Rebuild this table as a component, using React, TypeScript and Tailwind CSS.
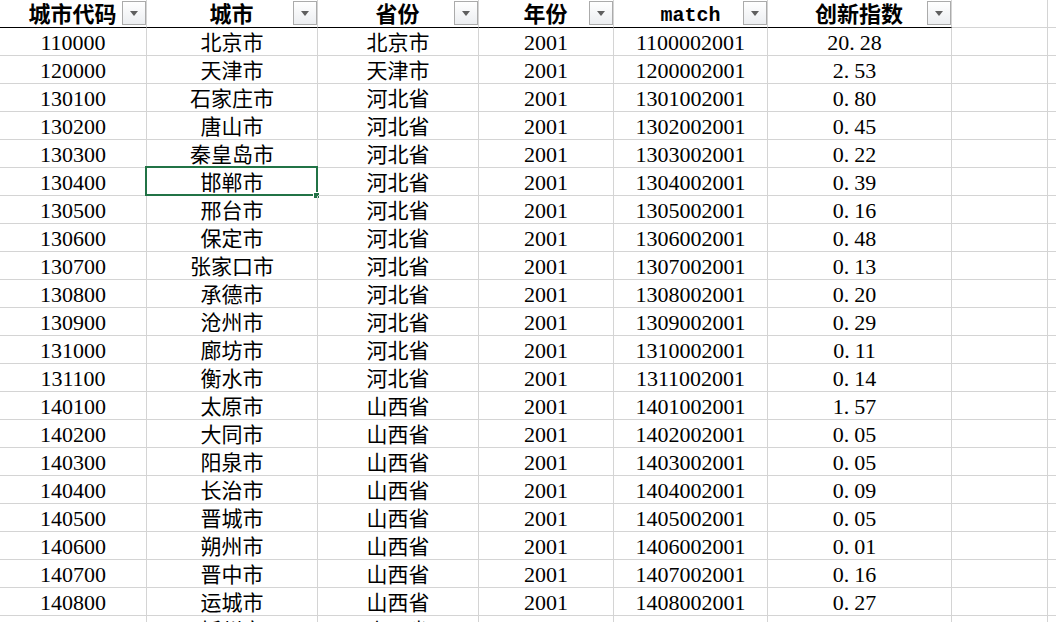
const rows: [string, string, string, string, string, string][] = [
  ["110000", "北京市", "北京市", "2001", "1100002001", "20.28"],
  ["120000", "天津市", "天津市", "2001", "1200002001", "2.53"],
  ["130100", "石家庄市", "河北省", "2001", "1301002001", "0.80"],
  ["130200", "唐山市", "河北省", "2001", "1302002001", "0.45"],
  ["130300", "秦皇岛市", "河北省", "2001", "1303002001", "0.22"],
  ["130400", "邯郸市", "河北省", "2001", "1304002001", "0.39"],
  ["130500", "邢台市", "河北省", "2001", "1305002001", "0.16"],
  ["130600", "保定市", "河北省", "2001", "1306002001", "0.48"],
  ["130700", "张家口市", "河北省", "2001", "1307002001", "0.13"],
  ["130800", "承德市", "河北省", "2001", "1308002001", "0.20"],
  ["130900", "沧州市", "河北省", "2001", "1309002001", "0.29"],
  ["131000", "廊坊市", "河北省", "2001", "1310002001", "0.11"],
  ["131100", "衡水市", "河北省", "2001", "1311002001", "0.14"],
  ["140100", "太原市", "山西省", "2001", "1401002001", "1.57"],
  ["140200", "大同市", "山西省", "2001", "1402002001", "0.05"],
  ["140300", "阳泉市", "山西省", "2001", "1403002001", "0.05"],
  ["140400", "长治市", "山西省", "2001", "1404002001", "0.09"],
  ["140500", "晋城市", "山西省", "2001", "1405002001", "0.05"],
  ["140600", "朔州市", "山西省", "2001", "1406002001", "0.01"],
  ["140700", "晋中市", "山西省", "2001", "1407002001", "0.16"],
  ["140800", "运城市", "山西省", "2001", "1408002001", "0.27"],
  ["140900", "忻州市", "山西省", "2001", "1409002001", "0.12"],
];

const widths = ["w-[147px]", "w-[171px]", "w-[161px]", "w-[135px]", "w-[154px]", "w-[184px]"];
const headers = ["城市代码", "城市", "省份", "年份", "match", "创新指数"];
// columns holding plain digits are set a bit larger than the CJK ones
const numeric = [true, false, false, true, true, true];

const FilterButton = () => (
  <div className="absolute right-0 top-[1px] flex h-[24px] w-[24px] items-center justify-center border border-[#ababab] bg-gradient-to-b from-white to-[#eceef1]">
    <div className="h-0 w-0 border-x-[4px] border-t-[5px] border-x-transparent border-t-[#5f5f5f]" />
  </div>
);

const Decimal = ({ value }: { value: string }) => {
  const [a, b] = value.split(".");
  return (
    <span className="pr-[10px] pt-[3px]">
      {a}
      <span className="mr-[5px]">.</span>
      {b}
    </span>
  );
};

const App = () => {
  return (
    <div
      className="h-[622px] w-[1056px] overflow-hidden bg-white text-black"
      style={{ fontFamily: '"Liberation Serif", "Noto Sans CJK SC", serif' }}
    >
      {/* header */}
      <div className="flex h-[28px]">
        {headers.map((h, i) => (
          <div
            key={h}
            className={`relative flex h-full shrink-0 items-center justify-center border-b border-r border-b-black border-r-[#d4d4d4] leading-none ${widths[i]}`}
          >
            {h === "match" ? (
              <span className="pt-[4px] text-[20px] font-bold" style={{ fontFamily: '"Liberation Mono", monospace' }}>
                match
              </span>
            ) : (
              <span className="pr-[1px] pt-[3px] text-[22px] font-bold">{h}</span>
            )}
            <FilterButton />
          </div>
        ))}
        <div className="h-full w-[96px] shrink-0 border-b border-r border-[#d4d4d4]" />
        <div className="h-full flex-1 border-b border-[#d4d4d4]" />
      </div>

      {/* body */}
      {rows.map((r, ri) => (
        <div key={r[0]} className="flex h-[28px]">
          {r.map((v, ci) => (
            <div
              key={ci}
              className={`relative flex h-full shrink-0 items-center justify-center border-b border-r border-[#d4d4d4] leading-none ${
                numeric[ci] ? "text-[22px]" : "text-[21px]"
              } ${widths[ci]}`}
            >
              {ci === 5 ? <Decimal value={v} /> : <span className="pt-[3px]">{v}</span>}
              {ri === 5 && ci === 1 && (
                <>
                  <div className="absolute left-[-2px] top-[-2px] h-[30px] w-[173px] border-2 border-[#217346]" />
                  <div className="absolute left-[166px] top-[24px] h-[7px] w-[7px] border border-white bg-[#217346]" />
                </>
              )}
            </div>
          ))}
          <div className="h-full w-[96px] shrink-0 border-b border-r border-[#d4d4d4]" />
          <div className="h-full flex-1 border-b border-[#d4d4d4]" />
        </div>
      ))}
    </div>
  );
};

export default App;
